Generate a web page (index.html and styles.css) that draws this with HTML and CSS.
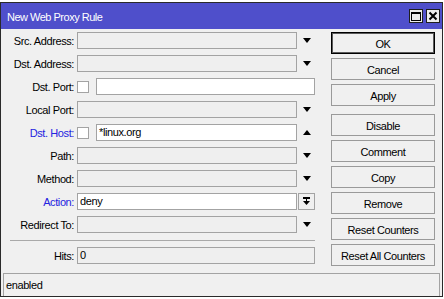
FILE: index.html
```html
<!DOCTYPE html>
<html lang="en">
<head>
    <meta charset="UTF-8">
    <title>New Web Proxy Rule</title>
    <link rel="stylesheet" href="styles.css">
</head>
<body>
    <div class="window">
        <div class="titlebar">
            <span class="title">New Web Proxy Rule</span>
            <div class="win-btns">
                <span class="win-btn"><span class="max-icon"></span></span>
                <span class="win-btn">
                    <svg width="10" height="10" viewBox="0 0 10 10"><path d="M1.5 1.5 L8.5 8.5 M8.5 1.5 L1.5 8.5" stroke="#000" stroke-width="2"/></svg>
                </span>
            </div>
        </div>

        <div class="content">
            <div class="form">
                <div class="row">
                    <label class="lbl">Src. Address:</label>
                    <div class="field"></div>
                    <span class="arrow-cell"><span class="tri-down"></span></span>
                </div>
                <div class="row">
                    <label class="lbl">Dst. Address:</label>
                    <div class="field"></div>
                    <span class="arrow-cell"><span class="tri-down"></span></span>
                </div>
                <div class="row">
                    <label class="lbl">Dst. Port:</label>
                    <span class="check"></span>
                    <div class="field white wide"></div>
                </div>
                <div class="row">
                    <label class="lbl">Local Port:</label>
                    <div class="field"></div>
                    <span class="arrow-cell"><span class="tri-down"></span></span>
                </div>
                <div class="row">
                    <label class="lbl blue">Dst. Host:</label>
                    <span class="check"></span>
                    <div class="field white short">*linux.org</div>
                    <span class="arrow-cell"><span class="tri-up"></span></span>
                </div>
                <div class="row">
                    <label class="lbl">Path:</label>
                    <div class="field"></div>
                    <span class="arrow-cell"><span class="tri-down"></span></span>
                </div>
                <div class="row">
                    <label class="lbl">Method:</label>
                    <div class="field"></div>
                    <span class="arrow-cell"><span class="tri-down"></span></span>
                </div>
                <div class="row">
                    <label class="lbl blue">Action:</label>
                    <div class="field white">deny</div>
                    <span class="drop-btn">
                        <svg width="9" height="9" viewBox="0 0 9 9"><rect x="1" y="0" width="7" height="2" fill="#000"/><path d="M1 4 H8 L4.5 8 Z" fill="#000"/><rect x="4" y="2" width="1" height="2" fill="#000"/></svg>
                    </span>
                </div>
                <div class="row">
                    <label class="lbl">Redirect To:</label>
                    <div class="field"></div>
                    <span class="arrow-cell"><span class="tri-down"></span></span>
                </div>
                <div class="separator"></div>
                <div class="row">
                    <label class="lbl">Hits:</label>
                    <div class="field wide-full">0</div>
                </div>
            </div>

            <div class="buttons">
                <button class="btn default">OK</button>
                <button class="btn">Cancel</button>
                <button class="btn">Apply</button>
                <button class="btn spaced">Disable</button>
                <button class="btn">Comment</button>
                <button class="btn">Copy</button>
                <button class="btn">Remove</button>
                <button class="btn">Reset Counters</button>
                <button class="btn">Reset All Counters</button>
            </div>
        </div>

        <div class="status">enabled</div>
    </div>
</body>
</html>
```

FILE: styles.css
```css
* {
    margin: 0;
    padding: 0;
    box-sizing: border-box;
}

body {
    background: #ffffff;
    font-family: 'Liberation Sans', Arial, sans-serif;
    font-size: 11px;
    letter-spacing: -0.4px;
    color: #000;
}

.window {
    margin-top: 2px;
    width: 443px;
    height: 295px;
    background: #f0f0f0;
    border: 1px solid #2a2a2a;
    display: flex;
    flex-direction: column;
}

.titlebar {
    height: 26px;
    background: #4f4fcb;
    display: flex;
    align-items: center;
    justify-content: space-between;
    padding: 0 2px 0 6px;
}

.title {
    color: #fff;
    letter-spacing: -0.5px;
    padding-top: 1px;
}

.win-btns {
    display: flex;
    gap: 3px;
}

.win-btn {
    width: 14px;
    height: 14px;
    background: #ececec;
    border: 1px solid #1e1e1e;
    display: flex;
    align-items: center;
    justify-content: center;
}

.max-icon {
    width: 10px;
    height: 9px;
    border: 1px solid #000;
    border-top-width: 2px;
}

.content {
    height: 244px;
    display: flex;
    padding: 3px 0 0 0;
    gap: 16px;
}

.form {
    width: 314px;
    display: flex;
    flex-direction: column;
    gap: 6px;
}

.row {
    display: flex;
    align-items: center;
    height: 17px;
}

.lbl {
    width: 73px;
    margin-right: 3px;
    text-align: right;
    white-space: nowrap;
}

.lbl.blue {
    color: #2323e0;
}

.field {
    width: 220px;
    height: 17px;
    border: 1px solid #a3a3a3;
    background: #efefef;
    padding-left: 2px;
    line-height: 15px;
}

.field.white {
    background: #fff;
}

.field.wide {
    width: 219px;
}

.field.short {
    width: 201px;
}

.field.wide-full {
    width: 238px;
}

.check {
    width: 12px;
    height: 12px;
    border: 1px solid #a3a3a3;
    background: #fff;
    margin-right: 7px;
}

.arrow-cell {
    width: 18px;
    height: 17px;
    display: flex;
    align-items: center;
    justify-content: center;
    padding-left: 2px;
}

.tri-down {
    width: 0;
    height: 0;
    border-left: 4.5px solid transparent;
    border-right: 4.5px solid transparent;
    border-top: 5px solid #000;
}

.tri-up {
    width: 0;
    height: 0;
    border-left: 4.5px solid transparent;
    border-right: 4.5px solid transparent;
    border-bottom: 5px solid #000;
}

.drop-btn {
    width: 17px;
    height: 17px;
    margin-left: 1px;
    border: 1px solid #a3a3a3;
    background: #f0f0f0;
    display: flex;
    align-items: center;
    justify-content: center;
}

.separator {
    height: 2px;
    margin-left: 9px;
    width: 305px;
    border-bottom: 1px solid #a9a9a9;
}

.buttons {
    width: 104px;
    display: flex;
    flex-direction: column;
    gap: 4px;
}

.btn {
    height: 22px;
    width: 104px;
    background: #f0f0f0;
    border: 1px solid #9a9a9a;
    font-family: inherit;
    font-size: 11px;
    letter-spacing: -0.4px;
    color: #000;
    padding-top: 1px;
}

.btn.default {
    border-color: #000;
    box-shadow: inset 0 0 0 1px #5a5a5a;
}

.btn.spaced {
    margin-top: 4px;
}

.status {
    height: 23px;
    margin: 0 2px;
    border: 1px solid #a3a3a3;
    border-bottom: none;
    padding: 3px 0 0 2px;
    line-height: 16px;
}
```
